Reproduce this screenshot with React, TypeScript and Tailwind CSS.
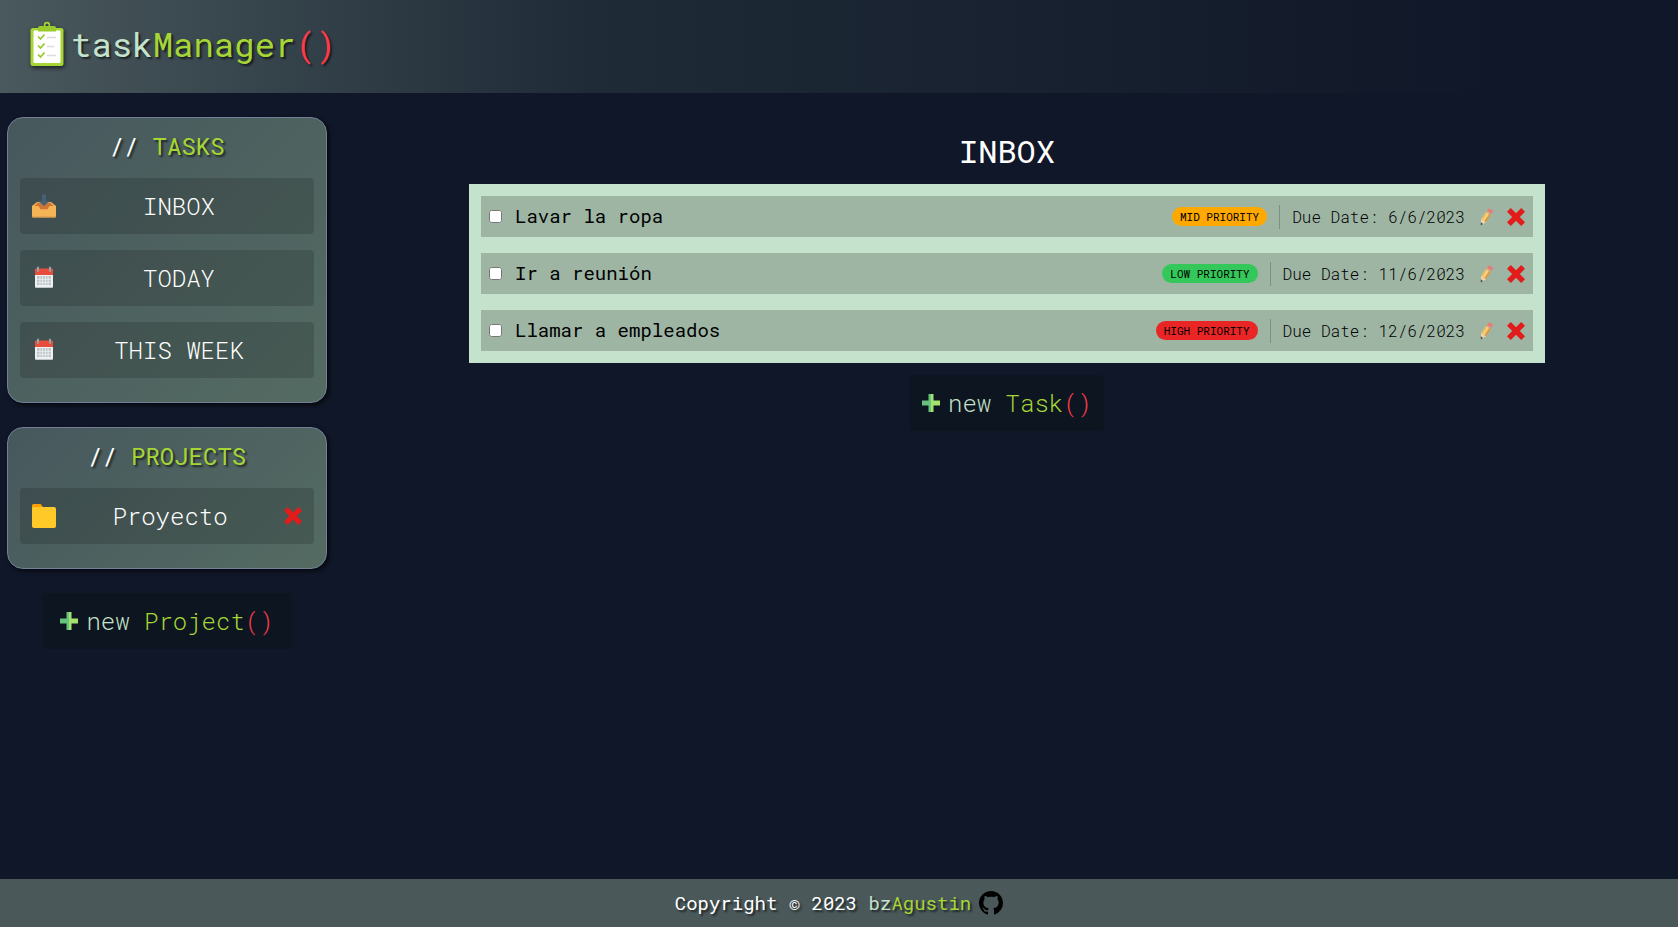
import React from "react";

const shadowText = "[text-shadow:2px_2px_2px_rgba(0,0,0,0.6)]";

function ClipboardLogo() {
  return (
    <svg viewBox="0 0 36 46" className="h-[46px] w-9 drop-shadow-[1px_2px_2px_rgba(0,0,0,0.6)]" aria-hidden="true">
      <circle cx="18" cy="4" r="2.4" fill="none" stroke="#a6d636" strokeWidth="1.6" />
      <rect x="1.500" y="7" width="33" height="38" rx="2.500" fill="#a6d636" />
      <rect x="4.500" y="9.500" width="27" height="32.500" rx="1" fill="#fff" />
      <path d="M9 10.500V7q0-2 2-2h14q2 0 2 2v3.500z" fill="#9acb2c" />
      <path d="M9 15.500l2.500 2.500 4-4.500M9 24.500l2.500 2.500 4-4.500M9 33.500l2.500 2.500 4-4.500" fill="none" stroke="#96c828" strokeWidth="1.700" />
      <path d="M18 16.500h9M18 25.500h7M18 34.500h9" stroke="#dcdcdc" strokeWidth="1.700" />
    </svg>
  );
}

function InboxIcon() {
  return (
    <svg viewBox="0 0 24 24" className="size-6" aria-hidden="true">
      <path d="M0 12l5-4h14l5 4v4H0z" fill="#f5b455" />
      <path d="M2.500 12L6 8.500h12l3.500 3.500h-4l-1.500 3.500H8L6.500 12z" fill="#cf7637" />
      <path d="M0 12h6c1.500 0 1.500 3.500 3 3.500h6c1.500 0 1.500-3.500 3-3.500h6v10.500q0 1-1 1H1q-1 0-1-1z" fill="#f5b455" />
      <path d="M0 22.500h24q0 1-1 1H1q-1 0-1-1z" fill="#d2964b" />
      <path d="M10 .5h4V7h3.500L12 12 6.500 7H10z" fill="#466075" />
    </svg>
  );
}

function CalendarIcon() {
  return (
    <svg viewBox="0 0 24 24" className="size-6" aria-hidden="true">
      <rect x="3" y="4" width="18" height="18" rx="1" fill="#bdc3c7" />
      <rect x="3" y="3" width="18" height="18" rx="1" fill="#ecf0f1" />
      <path d="M3 9V3.500q0-1 1-1h16q1 0 1 1V9z" fill="#e74c3c" />
      <path d="M5 10h14v9H5z" fill="#bdc3c7" />
      <path d="M5 13.300h14M5 16.300h14M8 10v9M10.700 10v9M13.400 10v9M16.100 10v9" stroke="#ecf0f1" strokeWidth=".9" />
      <path d="M6 1.500v3.500M18 1.500v3.500" stroke="#95a5a6" strokeWidth="2" strokeLinecap="round" />
    </svg>
  );
}

function FolderIcon() {
  return (
    <svg viewBox="0 0 24 24" className="size-6" aria-hidden="true">
      <path d="M0 6V1.500Q0 0 1.500 0H8q1 0 1.600 1l1 2V6z" fill="#ffa000" />
      <rect y="3" width="24" height="21" rx="2" fill="#ffca28" />
    </svg>
  );
}

function CrossIcon() {
  return (
    <svg viewBox="0 0 18 18" className="size-[18px]" aria-hidden="true">
      <path d="M3.800 0L9 5.200 14.200 0 18 3.800 12.800 9l5.200 5.200-3.800 3.800L9 12.800 3.800 18 0 14.200 5.200 9 0 3.800z" fill="#e21b1b" />
    </svg>
  );
}

function PencilIcon() {
  return (
    <svg viewBox="0 0 18 18" className="size-[18px]" aria-hidden="true">
      <path d="M4 11L9.800 2.500l4.900 3.100L9 14.200z" fill="#efbc60" />
      <path d="M5.600 12L11.300 3.500l1.200.8-5.700 8.500z" fill="#f7d587" />
      <path d="M7.600 13.300L13.400 4.800l1.300.8L9 14.200z" fill="#cf9848" />
      <path d="M4 11l5 3.200L4 17z" fill="#f0d3a8" />
      <path d="M3.900 14.300L6 15.900 3.700 17.400z" fill="#45484d" />
      <path d="M9.300 3.600L11 1.400Q12 .3 13.500 1l1.700 1.200q1 .9.300 2.100L14 6.700z" fill="#ea7a72" />
      <path d="M9.200 3.700l.8-1.200 4.800 3.200-.8 1.200z" fill="#b8a6a0" />
    </svg>
  );
}

function PlusIcon() {
  return (
    <svg viewBox="0 0 18 18" className="size-[18px]" aria-hidden="true">
      <path d="M6.500 0H9v18H6.500v-6.500H0v-5h6.500z" fill="#65c37e" />
      <path d="M9 0h2.500v6.500H18v5h-6.500V18H9z" fill="#a5e16f" />
    </svg>
  );
}

function GithubIcon() {
  return (
    <svg viewBox="0 0 16 16" className="size-6" aria-hidden="true">
      <path d="M8 0C3.580 0 0 3.580 0 8c0 3.540 2.290 6.530 5.470 7.590.4.070.55-.17.55-.38 0-.19-.01-.82-.01-1.490-2.010.37-2.530-.49-2.690-.94-.09-.23-.48-.94-.82-1.130-.28-.15-.68-.52-.01-.53.63-.01 1.080.58 1.230.82.72 1.210 1.870.87 2.330.66.070-.52.28-.87.51-1.070-1.780-.2-3.640-.89-3.640-3.950 0-.87.31-1.590.82-2.150-.08-.2-.36-1.020.08-2.120 0 0 .67-.21 2.200.82.64-.18 1.320-.27 2-.27s1.360.09 2 .27c1.530-1.040 2.200-.82 2.200-.82.44 1.100.16 1.920.08 2.120.51.56.82 1.270.82 2.150 0 3.070-1.870 3.750-3.650 3.950.29.25.54.73.54 1.480 0 1.070-.01 1.930-.01 2.200 0 .21.15.46.55.38A8.010 8.010 0 0016 8c0-4.420-3.580-8-8-8z" />
    </svg>
  );
}

function Panel({ title, children }: { title: string; children: React.ReactNode }) {
  return (
    <section className="flex flex-col rounded-2xl border border-[#718096] bg-linear-135 from-[#47585d] to-[#546b62] px-3 pb-6 shadow-[2px_2px_4px_rgba(0,0,0,0.7)]">
      <h2 className={`pt-3 pb-4 text-center text-2xl leading-8 text-white ${shadowText}`}>
        {"// "}
        <span className="text-[#a6d636]">{title}</span>
      </h2>
      <ul className="flex flex-col gap-4">{children}</ul>
    </section>
  );
}

function NavButton({ icon, label }: { icon: React.ReactNode; label: string }) {
  return (
    <button type="button" className="flex h-14 w-full items-center rounded bg-black/15 px-3 text-2xl font-light text-white">
      {icon}
      <span className="flex-1 text-center">{label}</span>
    </button>
  );
}

function NewButton({ name, className }: { name: string; className: string }) {
  return (
    <button type="button" className={`flex h-14 items-center gap-2 self-center rounded bg-[#0d1521] text-2xl font-light text-[#c5e3cc] ${className}`}>
      <PlusIcon />
      <span className="whitespace-pre">
        {"new "}
        <span className="text-[#a6d636]">{name}</span>
        <span className="text-[#fb3b4b]">()</span>
      </span>
    </button>
  );
}

const tasks = [
  { id: "t1", title: "Lavar la ropa", priority: "MID PRIORITY", color: "bg-[#ffa900]", due: "6/6/2023" },
  { id: "t2", title: "Ir a reunión", priority: "LOW PRIORITY", color: "bg-[#34c759]", due: "11/6/2023" },
  { id: "t3", title: "Llamar a empleados", priority: "HIGH PRIORITY", color: "bg-[#e92525]", due: "12/6/2023" },
];

export default function App() {
  return (
    <div className="flex min-h-screen flex-col bg-[#101728] font-['Roboto_Mono','Liberation_Mono',monospace]">
      <header className="flex h-[93px] items-center gap-1.5 bg-linear-to-r from-[#4a595d] via-[#1f2b37] via-35% to-[#101728] to-90% px-[29px] pb-1.5">
        <ClipboardLogo />
        <h1 className={`text-[34px] text-[#c5e3cc] ${shadowText}`}>
          task<span className="text-[#a6d636]">Manager</span>
          <span className="text-[#fb3b4b]">()</span>
        </h1>
      </header>

      <div className="flex flex-1">
        <aside className="flex w-[335px] shrink-0 flex-col gap-6 px-2 pt-6 pl-[7px]">
          <Panel title="TASKS">
            <li><NavButton icon={<InboxIcon />} label="INBOX" /></li>
            <li><NavButton icon={<CalendarIcon />} label="TODAY" /></li>
            <li><NavButton icon={<CalendarIcon />} label="THIS WEEK" /></li>
          </Panel>
          <Panel title="PROJECTS">
            <li className="flex h-14 items-center rounded bg-black/15 px-3 text-2xl font-light text-white">
              <button type="button" className="flex h-full flex-1 items-center">
                <FolderIcon />
                <span className="flex-1 text-center">Proyecto</span>
              </button>
              <button type="button" aria-label="Delete project"><CrossIcon /></button>
            </li>
          </Panel>
          <NewButton name="Project" className="px-[18px]" />
        </aside>

        <main className="flex flex-1 flex-col gap-3 pt-9 pr-[133px] pl-[134px]">
          <h2 className="text-center text-[32px] leading-[43px] text-white">INBOX</h2>
          <ul className="flex flex-col gap-4 bg-[#c5e3cc] p-3">
            {tasks.map((t) => (
              <li key={t.id} className="flex h-[41px] items-center bg-[#9eb5a4] px-2">
                <input type="checkbox" id={t.id} className="size-[13px]" />
                <label htmlFor={t.id} className="ml-[13px] flex-1 text-[19px] text-black">{t.title}</label>
                <span className={`rounded-full px-2 text-[11px] leading-[19px] text-black ${t.color}`}>{t.priority}</span>
                <span className="ml-3 border-l border-[#7b9080] pl-3 text-base font-light text-black">Due Date: {t.due}</span>
                <button type="button" aria-label="Edit task" className="ml-3"><PencilIcon /></button>
                <button type="button" aria-label="Delete task" className="ml-3"><CrossIcon /></button>
              </li>
            ))}
          </ul>
          <NewButton name="Task" className="px-3" />
        </main>
      </div>

      <footer className={`flex h-12 items-center justify-center gap-2 bg-[#4a585a] text-[19px] text-white ${shadowText}`}>
        <p>
          Copyright © 2023 <span className="text-[#c5e3cc]">bz</span>
          <span className="text-[#a6d636]">Agustin</span>
        </p>
        <a href="#github" aria-label="GitHub" className="text-black"><GithubIcon /></a>
      </footer>
    </div>
  );
}
